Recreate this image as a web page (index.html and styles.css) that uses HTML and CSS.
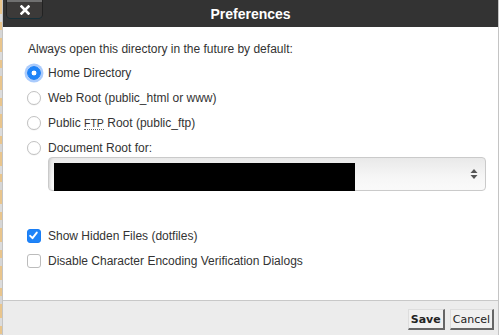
FILE: index.html
```html
<!DOCTYPE html>
<html>
<head>
<meta charset="utf-8">
<link rel="stylesheet" href="styles.css">
</head>
<body>
<div class="dialog">
  <div class="titlebar">
    <button class="close" type="button" aria-label="Close"><svg width="10" height="10" viewBox="0 0 10 10"><path d="M1.5 1.5 L8.5 8.5 M8.5 1.5 L1.5 8.5" stroke="#fff" stroke-width="2.6" stroke-linecap="square"/></svg></button>
    <div class="title">Preferences</div>
  </div>
  <div class="content">
    <p class="intro">Always open this directory in the future by default:</p>
    <div class="options">
      <label class="row"><span class="radio checked"></span>Home Directory</label>
      <label class="row"><span class="radio"></span>Web Root (public_html or www)</label>
      <label class="row"><span class="radio"></span>Public&nbsp;<abbr class="abbr">FTP</abbr>&nbsp;Root (public_ftp)</label>
      <label class="row"><span class="radio"></span>Document Root for:</label>
    </div>
    <div class="select">
      <div class="redacted"></div>
      <svg class="arrows" width="8" height="12" viewBox="0 0 8 12"><path d="M4 1 L7.5 5 H0.5 Z M4 11 L7.5 7 H0.5 Z" fill="#555"/></svg>
    </div>
    <div class="checks">
      <label class="row"><span class="check checked"><svg width="13" height="13" viewBox="0 0 13 13"><path d="M3.2 6.8 L5.5 9.2 L9.8 3.6" fill="none" stroke="#fff" stroke-width="1.9" stroke-linecap="round" stroke-linejoin="round"/></svg></span>Show Hidden Files (dotfiles)</label>
      <label class="row"><span class="check"></span>Disable Character Encoding Verification Dialogs</label>
    </div>
  </div>
  <div class="footer">
    <button class="btn btn-save" type="button">Save</button>
    <button class="btn" type="button">Cancel</button>
  </div>
</div>
</body>
</html>
```

FILE: styles.css
```css
html, body {
  margin: 0;
  padding: 0;
  width: 499px;
  height: 335px;
  overflow: hidden;
}
body {
  background: repeating-linear-gradient(180deg, #e9c58c 0 14px, #dcdcdc 14px 22px, #e9c58c 22px 30px, #d6d6d6 30px 38px);
  font-family: "Liberation Sans", Arial, sans-serif;
}
.dialog {
  margin-left: 2px;
  height: 335px;
  display: flex;
  flex-direction: column;
  background: #fff;
  border-left: 1px solid #c4c4c4;
  border-right: 1px solid #c4c4c4;
  box-sizing: border-box;
}
.titlebar {
  height: 27px;
  background: #333;
  position: relative;
  display: flex;
  align-items: center;
  justify-content: center;
  flex: none;
}
.title {
  color: #fff;
  font-weight: bold;
  font-size: 14px;
  margin-top: 1px;
}
.close {
  position: absolute;
  left: 4px;
  top: 0;
  width: 35px;
  height: 18px;
  padding: 0;
  border: none;
  border-radius: 0 0 4px 4px;
  background: linear-gradient(180deg, #707070 0 2px, #3c3a39 2px);
  box-shadow: 0 1px 0 #16303a, 1px 0 0 #222, -1px 0 0 #222;
  display: flex;
  align-items: center;
  justify-content: center;
}
.close svg {
  margin-top: 2px;
}
.content {
  flex: 1;
  padding: 13px 0 0 24px;
  color: #333;
  font-size: 12px;
}
.intro {
  margin: 0 0 0 1px;
  height: 18px;
  line-height: 18px;
}
.options {
  display: flex;
  flex-direction: column;
  gap: 7px;
  margin-top: 6px;
}
.checks {
  display: flex;
  flex-direction: column;
  gap: 7px;
  margin-top: 36px;
}
.row {
  display: flex;
  align-items: center;
  height: 18px;
  line-height: 18px;
}
.radio {
  width: 12px;
  height: 12px;
  border: 1px solid #c2c2c2;
  border-radius: 50%;
  box-sizing: content-box;
  background: #fff;
  margin-right: 7px;
  flex: none;
  box-shadow: 0 0.5px 1px rgba(0,0,0,0.08);
}
.radio.checked {
  border-color: #1a7ef5;
  background: radial-gradient(circle, #fff 0 2.2px, #1f84f8 2.7px);
  box-shadow: 0 0 0 2.5px rgba(100,160,250,0.55);
}
.check {
  width: 12px;
  height: 12px;
  border: 1px solid #bcbcbc;
  border-radius: 3px;
  background: #fff;
  margin-right: 7px;
  flex: none;
  display: flex;
  align-items: center;
  justify-content: center;
  position: relative;
}
.check svg {
  position: absolute;
  left: -1px;
  top: -1px;
}
.check.checked {
  background: #1f84f8;
  border-color: #1a7ef5;
}
.abbr {
  font-size: 10.5px;
  text-decoration: none;
  border-bottom: 1px dotted #666;
  line-height: 12px;
}
.select {
  margin: 0 12px 0 21px;
  height: 34px;
  box-sizing: border-box;
  border: 1px solid #cacaca;
  border-radius: 4px;
  background: linear-gradient(180deg, #e9e9e9, #f6f6f6 60%, #fafafa);
  box-shadow: inset 3px 0 3px -2px rgba(0,0,0,0.15);
  display: flex;
  align-items: flex-end;
  justify-content: space-between;
  padding: 0 7px 0 5px;
}
.redacted {
  width: 301px;
  height: 28px;
  background: #000;
  margin-bottom: -1px;
}
.arrows {
  align-self: center;
}
.footer {
  flex: none;
  height: 35px;
  box-sizing: border-box;
  border-top: 1px solid #c8c8c8;
  background: #ececec;
  display: flex;
  align-items: center;
  justify-content: flex-end;
  gap: 5px;
  padding: 0 4px 0 0;
}
.btn {
  font-family: "DejaVu Sans", Verdana, sans-serif;
  font-size: 11px;
  color: #222;
  background: #f0f0f0;
  border: 1px solid;
  border-color: #ddd #666 #666 #ddd;
  border-width: 1px 2px 2px 1px;
  padding: 2px 2px 1px 2px;
  height: 21px;
  margin-top: 2px;
  line-height: 15px;
}
.btn-save {
  font-weight: bold;
}
```
